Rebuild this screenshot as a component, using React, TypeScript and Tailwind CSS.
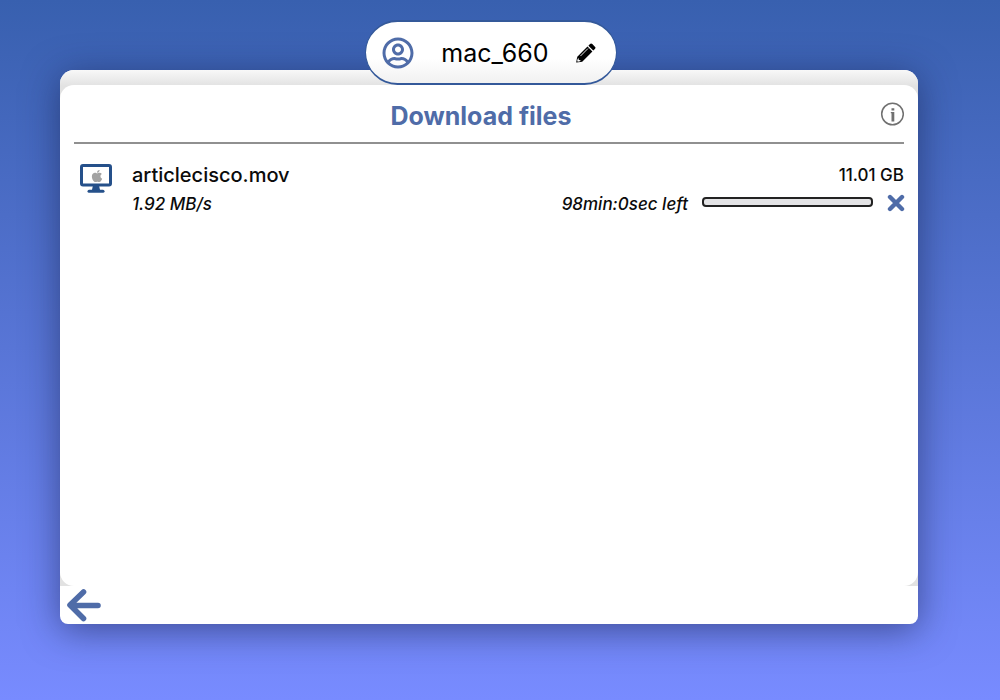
import { FaApple, FaRegUserCircle } from "react-icons/fa";

type Download = {
  name: string;
  speed: string;
  size: string;
  timeLeft: string;
  progress: number;
};

const downloads: Download[] = [
  {
    name: "articlecisco.mov",
    speed: "1.92 MB/s",
    size: "11.01 GB",
    timeLeft: "98min:0sec left",
    progress: 0,
  },
];

function MacComputerIcon() {
  return (
    <span className="relative block h-8 w-8 shrink-0">
      <svg viewBox="0 0 32 32" className="h-8 w-8" aria-hidden="true">
        <rect x="1.5" y="4.5" width="29" height="19.5" rx="1.5" fill="none" stroke="#25508a" strokeWidth="3" />
        <path d="M13 24.5h6l1.2 5h-8.4z" fill="#25508a" />
        <path d="M9 30.3h14" stroke="#25508a" strokeWidth="3" strokeLinecap="round" />
      </svg>
      <FaApple className="absolute left-2.5 top-2 h-3.5 w-3.5 text-[#a3a3a3]" aria-hidden="true" />
    </span>
  );
}

function PencilIcon() {
  return (
    <svg viewBox="0 0 20 20" className="h-5 w-5" aria-hidden="true">
      <path
        d="M14 1.100a1.600 1.600 0 0 1 2.300 0l2.600 2.600a1.600 1.600 0 0 1 0 2.300L17.300 7.600 12.400 2.700z"
        fill="currentColor"
      />
      <path d="M11.500 3.600l4.900 4.900L6.200 18.700.5 19.600a.3.300 0 0 1-.3-.3L1.300 13.800z" fill="currentColor" />
      <path d="M4.700 12.800l7-7" stroke="#ffffff" strokeWidth="0.9" strokeLinecap="round" />
      <path d="M2.500 15l.3 1.900 1.900.4-.6 1-2.300.4-.6-.6.4-2.200z" fill="#ffffff" />
    </svg>
  );
}

function InfoIcon() {
  return (
    <svg viewBox="0 0 24 24" className="h-6 w-6" aria-hidden="true">
      <circle cx="12.5" cy="12" r="10.8" fill="none" stroke="#707070" strokeWidth="1.5" />
      <path d="M11.5 6.2h2.8v2.2h-2.8zM10.800 10h3.500v9.6h-2.800v-8.4h-.7z" fill="#707070" />
    </svg>
  );
}

function DeviceName() {
  return (
    <div className="absolute inset-x-0 -top-[50px] flex justify-center pl-1">
      <div className="flex h-[65px] w-[252px] items-center rounded-full border-2 border-x border-[#34599a] bg-linear-to-b from-white from-60% to-[#f1f1f1] pl-4 pr-5">
        <FaRegUserCircle className="h-8 w-8 text-[#4f6ca8]" aria-hidden="true" />
        <span className="flex-1 text-center font-['Inter',sans-serif] text-[25px] font-normal leading-8 text-black">mac_660</span>
        <button type="button" aria-label="Edit device name" className="text-black">
          <PencilIcon />
        </button>
      </div>
    </div>
  );
}

function DownloadRow({ file }: { file: Download }) {
  return (
    <li className="flex gap-5 px-1.5">
      <MacComputerIcon />
      <div className="flex flex-1 items-start justify-between">
        <div>
          <p className="text-[20px] leading-7">{file.name}</p>
          <p className="text-[17px] italic leading-[30px]">{file.speed}</p>
        </div>
        <div className="-mr-1.5 flex flex-col items-end">
          <p className="text-[17px] leading-7">{file.size}</p>
          <div className="flex items-center">
            <span className="text-[17px] italic leading-[30px]">{file.timeLeft}</span>
            <div
              role="progressbar"
              aria-label={file.name}
              aria-valuenow={file.progress}
              aria-valuemin={0}
              aria-valuemax={100}
              className="mb-1 ml-3.5 h-2.5 w-[171px] overflow-hidden rounded-[4px] border-2 border-[#222222] bg-[#e4e4e6]"
            >
              <div className="h-full bg-[#4f6ca8]" style={{ width: `${file.progress}%` }} />
            </div>
            <button type="button" aria-label="Cancel download" className="-mr-px mb-0.5 ml-3.5">
              <svg viewBox="0 0 18 18" className="h-[18px] w-[18px]" aria-hidden="true">
                <path d="M3 3l12 12M15 3L3 15" stroke="#4f6ca8" strokeWidth="4.4" strokeLinecap="round" />
              </svg>
            </button>
          </div>
        </div>
      </div>
    </li>
  );
}

export default function App() {
  return (
    <div className="flex min-h-screen flex-col bg-linear-to-b from-[#3860af] to-[#788bff] pb-[76px] pl-15 pr-[82px] pt-[70px] font-['Inter','Liberation_Sans',sans-serif] font-medium text-[#0b0b0b]">
      <main className="relative flex flex-1 flex-col rounded-t-[14px] rounded-b-lg bg-white shadow-[0_6px_36px_rgba(20,30,70,0.55)]">
        <div className="flex flex-1 flex-col rounded-t-[14px] bg-linear-to-b from-[#f8f8f8] to-[#e2e2e2] to-[16px] pt-[15px]">
          <section className="flex-1 rounded-[14px] bg-white px-3.5">
            <header className="flex h-[59px] items-center border-b-2 border-[#909090]">
              <h1 className="min-w-0 flex-1 pl-2 pt-1 text-center text-[25px] font-bold leading-8 text-[#4f6ca8]">Download files</h1>
              <button type="button" aria-label="Information">
                <InfoIcon />
              </button>
            </header>
            <ul className="pt-[17px]">
              {downloads.map((file) => (
                <DownloadRow key={file.name} file={file} />
              ))}
            </ul>
          </section>
        </div>
        <footer className="flex h-[38px] items-center px-1.5">
          <button type="button" aria-label="Back">
            <svg viewBox="0 0 36 36" className="h-9 w-9" aria-hidden="true">
              <path
                d="M17.500 5L4 18l13.500 13.500M5 18.500h27"
                fill="none"
                stroke="#4f6ca8"
                strokeWidth="5.6"
                strokeLinecap="round"
                strokeLinejoin="round"
              />
            </svg>
          </button>
        </footer>
        <DeviceName />
      </main>
    </div>
  );
}
